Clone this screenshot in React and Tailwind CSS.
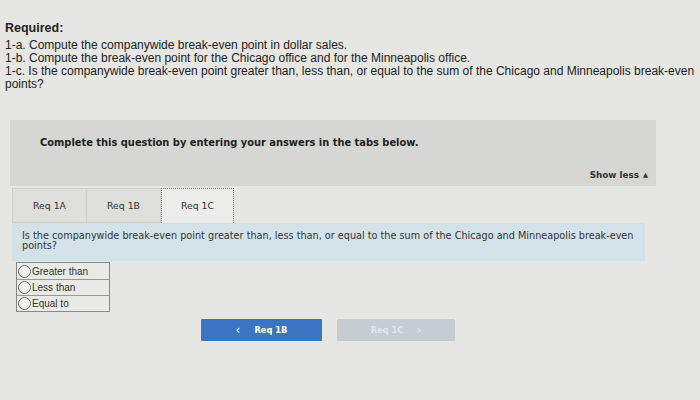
import React from "react";

export default function App() {
  return (
    <div className="w-[700px] h-[400px] bg-[#e6e6e3] overflow-hidden text-[#222]" style={{ fontFamily: "'Liberation Sans', Arial, sans-serif" }}>
      <div className="pt-[21px] pl-[5px] pr-[2px]">
        <div className="text-[12.5px] font-bold leading-[15px]">Required:</div>
        <div className="text-[12px] leading-[13px] mt-[3px] whitespace-nowrap">
          <div>1-a. Compute the companywide break-even point in dollar sales.</div>
          <div>1-b. Compute the break-even point for the Chicago office and for the Minneapolis office.</div>
          <div>1-c. Is the companywide break-even point greater than, less than, or equal to the sum of the Chicago and Minneapolis break-even</div>
          <div>points?</div>
        </div>
      </div>

      <div className="ml-[10px] mt-[29px] w-[646px] h-[66px] bg-[#d6d6d3] relative" style={{ fontFamily: "'DejaVu Sans', Verdana, sans-serif" }}>
        <div className="pl-[30px] pt-[16px] text-[9.9px] font-bold text-[#222]">Complete this question by entering your answers in the tabs below.</div>
        <div className="absolute right-[8px] bottom-[4px] text-[8.8px] font-bold text-[#333] flex items-center gap-[4px]">
          Show less <span className="text-[6.5px]">▲</span>
        </div>
      </div>

      <div className="ml-[12px] mt-[2px] w-[633px]" style={{ fontFamily: "'DejaVu Sans', Verdana, sans-serif" }}>
        <div className="flex h-[35px] text-[9.3px] text-[#333]">
          <div className="w-[75px] bg-[#dededb] border border-[#cfcfcc] flex items-center justify-center">Req 1A</div>
          <div className="w-[74px] bg-[#dededb] border border-[#cfcfcc] border-l-0 flex items-center justify-center">Req 1B</div>
          <div className="w-[73px] bg-[#ececea] border border-dotted border-[#777] border-b-0 flex items-center justify-center">Req 1C</div>
        </div>
        <div className="bg-[#d3e2e9] h-[38px] pl-[10px] pr-[4px] pt-[8px] text-[9.7px] leading-[10px] text-[#333]">
          Is the companywide break-even point greater than, less than, or equal to the sum of the Chicago and Minneapolis break-even points?
        </div>
      </div>

      <div className="ml-[16px] mt-[1px] w-[94px] border border-[#888] text-[10px] text-[#333]">
        {["Greater than", "Less than", "Equal to"].map((t, i) => (
          <div key={t} className={"flex items-center h-[16px] gap-[1px] bg-[#e9e9e6] " + (i > 0 ? "border-t border-[#999]" : "")}>
            <span className="w-[13px] h-[13px] rounded-full border border-[#666] bg-[#f2f2f0] ml-[1px] shrink-0"></span>
            <span>{t}</span>
          </div>
        ))}
      </div>

      <div className="flex ml-[201px] mt-[7px] gap-[15px]" style={{ fontFamily: "'DejaVu Sans', Verdana, sans-serif" }}>
        <div className="w-[121px] h-[22px] bg-[#3b74c2] rounded-[1px] flex items-center justify-center gap-[14px] text-white text-[8.3px] font-bold">
          <span className="text-[12px] leading-none font-normal">‹</span>
          <span>Req 1B</span>
        </div>
        <div className="w-[118px] h-[22px] bg-[#c6ccd2] rounded-[1px] flex items-center justify-center gap-[13px] text-[#e4e7ea] text-[8.3px] font-bold">
          <span>Req 1C</span>
          <span className="text-[12px] leading-none font-normal">›</span>
        </div>
      </div>
    </div>
  );
}
